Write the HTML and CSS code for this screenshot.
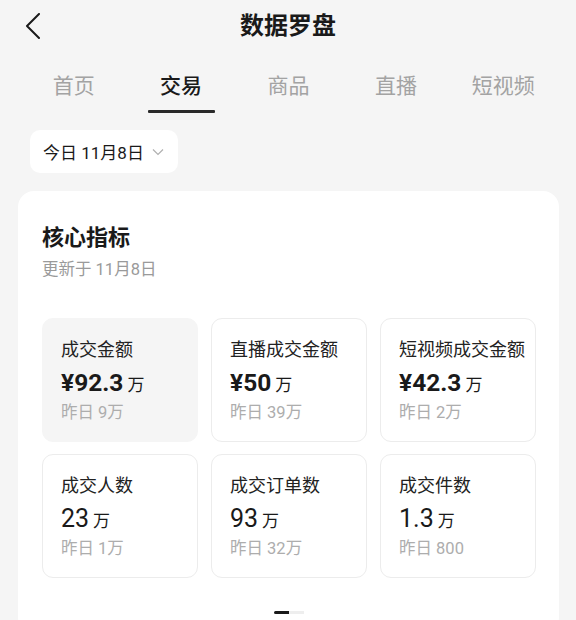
FILE: index.html
```html
<!DOCTYPE html>
<html>
<head>
	<meta charset="utf-8">
	<title>数据罗盘</title>
	<link rel="stylesheet" href="styles.css">
</head>
<body>
	<div class="header">
		<div class="back">
			<svg width="16" height="26" viewBox="0 0 16 26"><path d="M14 1 L2 13 L14 25" fill="none" stroke="#1a1a1a" stroke-width="2" stroke-linecap="round" stroke-linejoin="round"/></svg>
		</div>
		<div class="title">数据罗盘</div>
		<div></div>
	</div>

	<div class="tabs">
		<div class="tab">首页</div>
		<div class="tab active">交易</div>
		<div class="tab">商品</div>
		<div class="tab">直播</div>
		<div class="tab">短视频</div>
	</div>

	<div class="date-pill">
		今日 11月8日
		<svg width="12" height="8" viewBox="0 0 12 8"><path d="M1 1.5 L6 6.5 L11 1.5" fill="none" stroke="#b0b0b0" stroke-width="1.2"/></svg>
	</div>

	<div class="card">
		<div class="card-title">核心指标</div>
		<div class="card-sub">更新于 11月8日</div>

		<div class="grid">
			<div class="tile selected">
				<div class="label">成交金额</div>
				<div class="value"><b>¥92.3</b><span>万</span></div>
				<div class="prev">昨日 9万</div>
			</div>
			<div class="tile">
				<div class="label">直播成交金额</div>
				<div class="value"><b>¥50</b><span>万</span></div>
				<div class="prev">昨日 39万</div>
			</div>
			<div class="tile">
				<div class="label">短视频成交金额</div>
				<div class="value"><b>¥42.3</b><span>万</span></div>
				<div class="prev">昨日 2万</div>
			</div>
			<div class="tile">
				<div class="label">成交人数</div>
				<div class="value light"><b>23</b><span>万</span></div>
				<div class="prev">昨日 1万</div>
			</div>
			<div class="tile">
				<div class="label">成交订单数</div>
				<div class="value light"><b>93</b><span>万</span></div>
				<div class="prev">昨日 32万</div>
			</div>
			<div class="tile">
				<div class="label">成交件数</div>
				<div class="value light"><b>1.3</b><span>万</span></div>
				<div class="prev">昨日 800</div>
			</div>
		</div>

		<div class="dots">
			<span class="on"></span><span></span>
		</div>
	</div>
</body>
</html>
```

FILE: styles.css
```css
body {
	margin: 0;
	background-color: #f5f5f5;
	font-family: Roboto, "Noto Sans CJK SC", sans-serif;
	color: #1a1a1a;
}

.header {
	display: grid;
	grid-template-columns: 1fr auto 1fr;
	align-items: center;
	height: 52px;
}
.back {
	padding-left: 25px;
	display: flex;
	align-items: center;
}
.title {
	font-size: 24px;
	font-weight: 600;
	line-height: 52px;
}

.tabs {
	display: grid;
	grid-template-columns: repeat(5, 1fr);
	padding: 0 19px 0 20px;
}
.tab {
	display: flex;
	flex-direction: column;
	align-items: center;
	padding-top: 19px;
	font-size: 21px;
	line-height: 30px;
	color: #a3a3a3;
}
.tab::after {
	content: "";
	width: 67px;
	height: 3px;
	margin-top: 9px;
	border-radius: 1px;
}
.tab.active {
	color: #1a1a1a;
	font-weight: 500;
}
.tab.active::after {
	background-color: #2a2a2a;
}

.date-pill {
	display: inline-flex;
	align-items: center;
	gap: 8px;
	height: 43px;
	margin: 17px 0 0 30px;
	padding: 0 14px 0 13px;
	background-color: #fff;
	border-radius: 10px;
	font-size: 17px;
}

.card {
	margin: 18px 17px 0 18px;
	padding: 32px 23px 20px 24px;
	background-color: #fff;
	border-radius: 16px;
}
.card-title {
	font-size: 22px;
	font-weight: 600;
	line-height: 30px;
}
.card-sub {
	margin-top: 6px;
	font-size: 16.5px;
	line-height: 22px;
	color: #9a9a9a;
}

.grid {
	display: grid;
	grid-template-columns: repeat(3, 156px);
	gap: 12px 13px;
	margin-top: 37px;
}
.tile {
	box-sizing: border-box;
	height: 124px;
	padding: 19px 0 0 18px;
	border: 1px solid #ececec;
	border-radius: 11px;
}
.tile.selected {
	background-color: #f5f5f5;
	border-color: #f5f5f5;
}
.label {
	font-size: 18px;
	line-height: 24px;
	color: #222;
}
.value {
	margin-top: 4px;
	line-height: 34px;
	white-space: nowrap;
}
.value b {
	font-size: 24.5px;
	font-weight: 700;
}
.value.light b {
	font-size: 25px;
	font-weight: 400;
}
.value span {
	margin-left: 4px;
	font-size: 17px;
}
.prev {
	margin-top: -2px;
	font-size: 16.5px;
	line-height: 24px;
	color: #adadad;
}

.dots {
	display: flex;
	justify-content: center;
	margin-top: 33px;
	padding-right: 1px;
}
.dots span {
	width: 15px;
	height: 3px;
	background-color: #eeeeee;
}
.dots span.on {
	background-color: #1a1a1a;
	border-radius: 2px 0 0 2px;
}
```
